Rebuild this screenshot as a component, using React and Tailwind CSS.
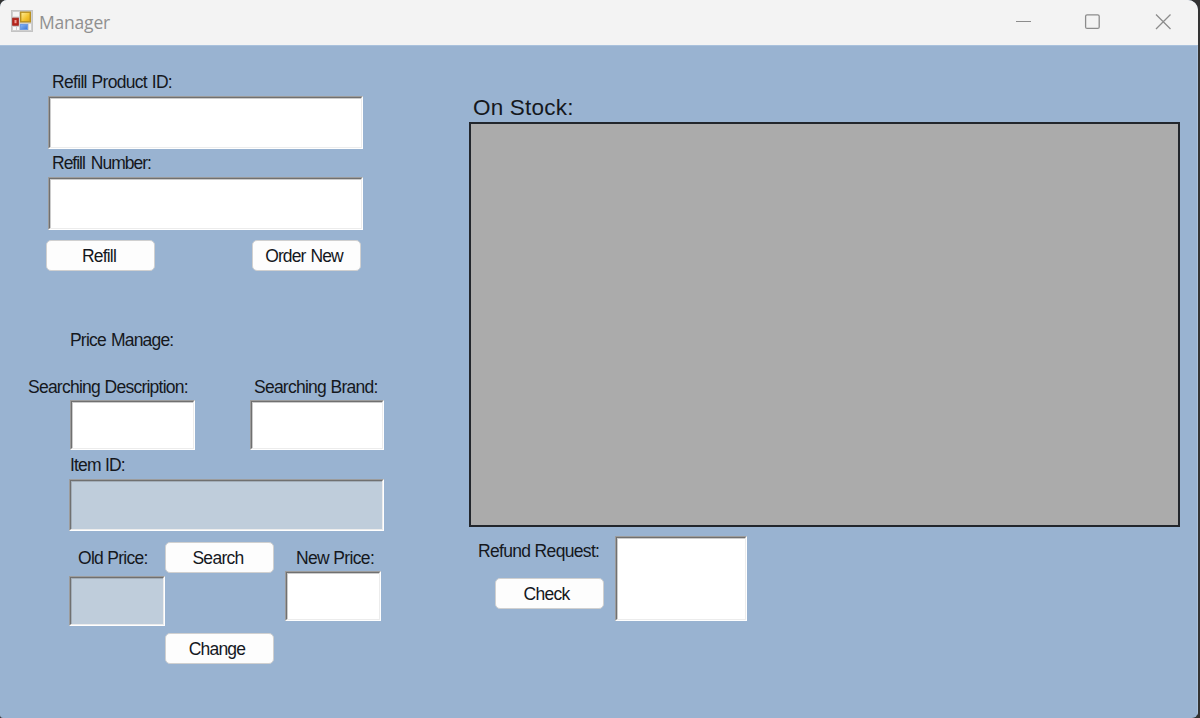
import React from "react";
import clsx from "clsx";

function Label({ className, children }) {
  return (
    <span className={clsx("block whitespace-nowrap text-[17.5px] leading-5", className)}>
      {children}
    </span>
  );
}

function SunkenBox({ className, disabled }) {
  return (
    <div className={clsx("shrink-0 border border-t-[#9c9c9c] border-l-[#9c9c9c] border-r-white border-b-white", className)}>
      <div
        className={clsx(
          "h-full w-full border border-t-[#707070] border-l-[#707070] border-r-[#ececec] border-b-[#ececec]",
          disabled
            ? "bg-[#bfcddb] shadow-[inset_1px_1px_0_#a3aeb9]"
            : "bg-white shadow-[inset_1px_1px_0_#cccccc]"
        )}
      />
    </div>
  );
}

function Button({ className, children }) {
  return (
    <button
      className={clsx(
        "flex h-[31px] w-[109px] shrink-0 items-center justify-center rounded-[5px] border border-[#d0d0d0] bg-[#fdfdfd] text-[17.5px] leading-5",
        className
      )}
    >
      {children}
    </button>
  );
}

function FormIcon() {
  return (
    <svg width="22" height="22" viewBox="0 0 22 22">
      <defs>
        <linearGradient id="gold" x1="0" y1="0" x2="1" y2="1">
          <stop offset="0" stopColor="#fff0a0" />
          <stop offset="0.6" stopColor="#f3c32e" />
          <stop offset="1" stopColor="#dfa51c" />
        </linearGradient>
        <linearGradient id="blue" x1="0" y1="0" x2="1" y2="1">
          <stop offset="0" stopColor="#8bb8f5" />
          <stop offset="1" stopColor="#3c74d4" />
        </linearGradient>
      </defs>
      <rect x="0.5" y="0.5" width="21" height="21" fill="#cfcfcf" stroke="#c3c3c3" />
      <rect x="2" y="2" width="6" height="4.5" fill="#f4f4f4" />
      <rect x="2" y="17" width="3" height="3" fill="#f8f8f8" />
      <rect x="6" y="17" width="2" height="3" fill="#f8f8f8" />
      <rect x="17.8" y="14" width="2.2" height="6" fill="#f4f4f4" />
      <rect x="9.7" y="2.2" width="9.6" height="9.6" fill="url(#gold)" stroke="#b9901f" strokeWidth="1.4" />
      <rect x="1.7" y="8.2" width="5.6" height="7" fill="#b8251c" stroke="#a5251d" />
      <rect x="3.5" y="10" width="2" height="3.2" fill="#eda299" />
      <rect x="9.5" y="14.5" width="7" height="5" fill="url(#blue)" stroke="#6f9ce4" />
    </svg>
  );
}

function TitleBar() {
  return (
    <header className="flex h-[46px] shrink-0 items-center border-b border-[#a9c1dc] bg-[#f3f3f3] pl-[11px]">
      <div className="-mt-[3px] shrink-0">
        <FormIcon />
      </div>
      <h1 className="ml-[6px] -mt-[2px] grow font-['Open_Sans','Noto_Sans',sans-serif] text-[17.5px] leading-6 tracking-[-0.2px] text-[#909090]">
        Manager
      </h1>
      <svg className="mr-[27px] -mt-[1px] shrink-0" width="156" height="16" viewBox="0 0 156 16" fill="none" stroke="#8c8c8c">
        <path d="M1 7.5H16" />
        <rect x="70.6" y="0.8" width="13.6" height="13.6" rx="1.5" strokeWidth="1.3" />
        <path d="M141 0.5L155.5 15M155.5 0.5L141 15" strokeWidth="1.3" />
      </svg>
    </header>
  );
}

function RefillForm() {
  return (
    <section className="flex flex-col pl-[48px]">
      <Label className="ml-1 tracking-[-0.68px] [word-spacing:0.5px]">Refill Product ID:</Label>
      <SunkenBox className="mt-1 h-[53px] w-[315px]" />
      <Label className="ml-1 mt-1 tracking-[-1px] [word-spacing:2px]">Refill Number:</Label>
      <SunkenBox className="mt-1 h-[53px] w-[315px]" />
      <div className="-ml-[2px] mt-[10px] flex gap-[97px]">
        <Button className="pr-[3px] tracking-[-0.8px]">Refill</Button>
        <Button className="pr-[5px] tracking-[-0.9px] [word-spacing:1px]">Order New</Button>
      </div>
    </section>
  );
}

function PriceForm() {
  return (
    <section className="mt-[59px] flex flex-col">
      <Label className="ml-[70px] tracking-[-0.8px] [word-spacing:1px]">Price Manage:</Label>
      <div className="mt-[27px] flex">
        <Label className="ml-[28px] w-[226px] tracking-[-0.76px] [word-spacing:0.5px]">Searching Description:</Label>
        <Label className="tracking-[-0.76px] [word-spacing:0.5px]">Searching Brand:</Label>
      </div>
      <div className="ml-[70px] mt-[3px] flex gap-[55px]">
        <SunkenBox className="h-[50px] w-[125px]" />
        <SunkenBox className="h-[50px] w-[134px]" />
      </div>
      <Label className="ml-[70px] mt-[5px] tracking-[-0.8px]">Item ID:</Label>
      <SunkenBox disabled className="ml-[69px] mt-1 h-[52px] w-[315px]" />
      <div className="ml-[69px] mt-[11px] flex items-start">
        <div className="w-24">
          <Label className="ml-[9px] mt-[6px] tracking-[-0.72px]">Old Price:</Label>
          <SunkenBox disabled className="mt-2 h-[50px] w-24" />
        </div>
        <div className="flex w-[120px] flex-col gap-[60px]">
          <Button className="pr-[3px] tracking-[-0.7px]">Search</Button>
          <Button className="pr-[5px] tracking-[-0.8px]">Change</Button>
        </div>
        <div>
          <Label className="ml-[11px] mt-[6px] tracking-[-0.65px]">New Price:</Label>
          <SunkenBox className="mt-[3px] h-[50px] w-24" />
        </div>
      </div>
    </section>
  );
}

function StockPanel() {
  return (
    <section className="flex w-[711px] flex-col pt-[48px]">
      <h2 className="ml-[4px] text-[22.5px] leading-7 tracking-[0.2px]">On Stock:</h2>
      <div className="h-[405px] border-2 border-[#22262c] bg-[#ababab]" />
      <div className="mt-[9px] flex">
        <div className="flex w-[146px] flex-col">
          <Label className="ml-[9px] mt-[5px] tracking-[-0.67px]">Refund Request:</Label>
          <Button className="ml-[26px] mt-[17px] pr-[6px] tracking-[-0.7px]">Check</Button>
        </div>
        <SunkenBox className="h-[85px] w-[132px]" />
      </div>
    </section>
  );
}

export default function App() {
  return (
    <div className="h-[718px] w-[1200px] overflow-hidden bg-[#333333] font-['Liberation_Sans',Arial,sans-serif] text-[#15181d]">
      <div className="flex h-full w-[1198px] flex-col overflow-hidden rounded-tl-[7px] rounded-tr-[10px] rounded-br-[6px] rounded-bl-[3px] bg-[#99b3d1]">
        <TitleBar />
        <main className="flex grow border-r border-[#a9c1dc]">
          <div className="w-[469px] shrink-0 pt-[26px]">
            <RefillForm />
            <PriceForm />
          </div>
          <StockPanel />
        </main>
      </div>
    </div>
  );
}
